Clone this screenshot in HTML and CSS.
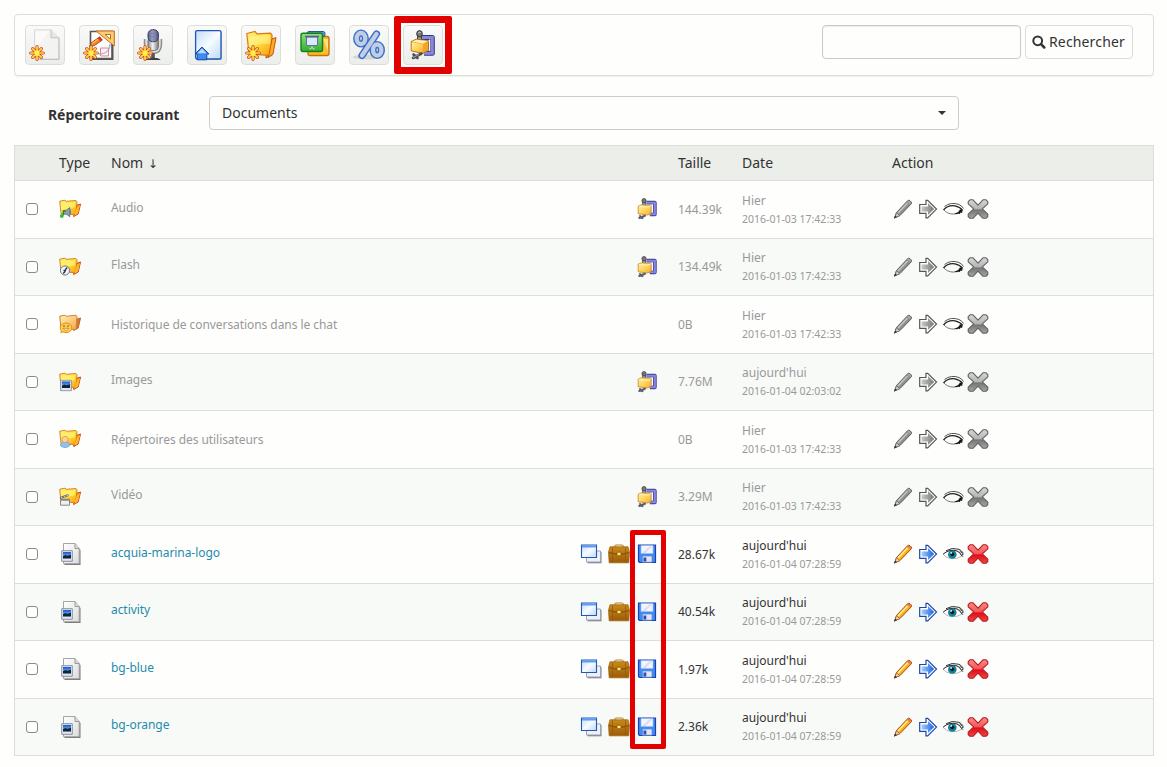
FILE: index.html
```html
<!DOCTYPE html>
<html lang="fr">
<head>
<meta charset="utf-8">
<title>Documents</title>
<link rel="stylesheet" href="styles.css">
</head>
<body>
<svg class="sprite" width="0" height="0" aria-hidden="true">
  <defs>
    <linearGradient id="gFolder" x1="0" y1="0" x2="1" y2="1"><stop offset="0" stop-color="#fff27a"/><stop offset=".5" stop-color="#ffdb3d"/><stop offset="1" stop-color="#f79a10"/></linearGradient>
    <linearGradient id="gPale" x1="0" y1="0" x2="1" y2="1"><stop offset="0" stop-color="#fff3b8"/><stop offset="1" stop-color="#f3a64c"/></linearGradient>
    <linearGradient id="gPaper" x1="0" y1="0" x2="1" y2="1"><stop offset="0" stop-color="#ffffff"/><stop offset="1" stop-color="#dcdcdc"/></linearGradient>
    <linearGradient id="gBlue" x1="0" y1="0" x2="1" y2="1"><stop offset="0" stop-color="#c3dcfa"/><stop offset=".5" stop-color="#f7fbff"/><stop offset="1" stop-color="#bcd9f8"/></linearGradient>
    <linearGradient id="gArrow" x1="0" y1="0" x2="1" y2="0"><stop offset="0" stop-color="#9ed0ff"/><stop offset="1" stop-color="#1b62dc"/></linearGradient>
    <linearGradient id="gArrowG" x1="0" y1="0" x2="1" y2="0"><stop offset="0" stop-color="#c9c9c9"/><stop offset="1" stop-color="#777"/></linearGradient>
    <linearGradient id="gRed" x1="0" y1="0" x2="0" y2="1"><stop offset="0" stop-color="#ff8a80"/><stop offset=".48" stop-color="#f1575a"/><stop offset=".55" stop-color="#e30c14"/><stop offset="1" stop-color="#f04545"/></linearGradient>
    <linearGradient id="gGray" x1="0" y1="0" x2="0" y2="1"><stop offset="0" stop-color="#d8d8d8"/><stop offset=".48" stop-color="#b4b4b4"/><stop offset=".55" stop-color="#757575"/><stop offset="1" stop-color="#a5a5a5"/></linearGradient>
    <linearGradient id="gGreen" x1="0" y1="0" x2="0" y2="1"><stop offset="0" stop-color="#93e07d"/><stop offset="1" stop-color="#2fae2f"/></linearGradient>
    <linearGradient id="gPhoto" x1="0" y1="0" x2="0" y2="1"><stop offset="0" stop-color="#1456c9"/><stop offset="1" stop-color="#9fdcff"/></linearGradient>
    <linearGradient id="gMic" x1="0" y1="0" x2="1" y2="0"><stop offset="0" stop-color="#55587c"/><stop offset=".45" stop-color="#a5a9cf"/><stop offset="1" stop-color="#484b6c"/></linearGradient>
    <linearGradient id="gMetal" x1="0" y1="0" x2="1" y2="0"><stop offset="0" stop-color="#888"/><stop offset=".45" stop-color="#f2f2f2"/><stop offset="1" stop-color="#777"/></linearGradient>
    <linearGradient id="gCase" x1="0" y1="0" x2="0" y2="1"><stop offset="0" stop-color="#c98a1c"/><stop offset="1" stop-color="#9c5a08"/></linearGradient>
    <linearGradient id="gBox" x1="0" y1="0" x2="1" y2="1"><stop offset="0" stop-color="#fff0a8"/><stop offset=".5" stop-color="#ffd65e"/><stop offset="1" stop-color="#f3ac35"/></linearGradient>
  </defs>

  <symbol id="star" viewBox="0 0 16 16">
    <g stroke="#cf4a1c" stroke-width="3.200" stroke-linecap="round"><path d="M8 1.700v12.600M1.700 8h12.600M3.600 3.600l8.800 8.800M12.400 3.600l-8.800 8.800"/></g>
    <g stroke="#ffd84a" stroke-width="1.700" stroke-linecap="round"><path d="M8 1.700v12.600M1.700 8h12.600M3.600 3.600l8.800 8.800M12.400 3.600l-8.800 8.800"/></g>
    <circle cx="8" cy="8" r="2.400" fill="#fff04e"/>
  </symbol>

  <symbol id="new-page" viewBox="0 0 32 32">
    <path d="M5.500.800h16.500l7.800 8V30H5.500z" fill="#f3f3f2" stroke="#dadada"/>
    <path d="M6.500 2h14l-14 18z" fill="#fff" opacity=".6"/>
    <path d="M22 .800v8h7.800" fill="#e6e6e6" stroke="#c4c4c4"/>
    <path d="M7 30.400h23V9" fill="none" stroke="#bdbdbd"/>
    <use href="#star" x="0" y="16" width="16" height="16"/>
  </symbol>

  <symbol id="draw" viewBox="0 0 32 32">
    <path d="M9 3.500h21.500V31H9z" fill="#555"/>
    <path d="M7.500 2.500h21.500V29.500H7.500z" fill="#fff" stroke="#555" stroke-width="1.600"/>
    <path d="M27 15c0 6-4 10-11 10" fill="none" stroke="#8dbcf0" stroke-width="1.500"/>
    <path d="M17.500 19h8v8h-8z" fill="#f6cdd6" fill-opacity=".3" stroke="#e9868d"/>
    <path fill-rule="evenodd" d="M13 2h18.300v15zm9 3.500 5.500 4.600V5.500z" fill="#f9cd74" stroke="#c66b18"/>
    <path d="m6.500 18 1.800-4.200 8.500-6 2.600 3.300-8.100 5.500z" fill="#f38a24" stroke="#a93b13" stroke-width=".9"/>
    <path d="m14.500 9 2.600 3.200 2-1.500-2.300-3z" fill="#d9352d"/>
    <path d="m9 14.500 6-4.300" stroke="#ffd36a"/>
    <use href="#star" x="0" y="16" width="16" height="16"/>
  </symbol>

  <symbol id="mic" viewBox="0 0 32 32">
    <path d="M7.500 10v5c0 6 3 9.500 8.500 9.500s8.500-3.500 8.500-9.500v-5" fill="#dedede" stroke="#8d8d8d" stroke-width="1.500"/>
    <path d="M14.200 24h3.600v5h-3.600z" fill="#555"/>
    <path d="M8.500 31c1-3 14-3 15 0z" fill="#3e3e3e"/>
    <rect x="11" y="8" width="10.500" height="13.500" rx="4" fill="url(#gMetal)" stroke="#777"/>
    <rect x="11" y=".700" width="10.500" height="12" rx="4.500" fill="url(#gMic)" stroke="#3f4160"/>
    <path d="M16.200 1v12M12 4.500h8.500M12 7.500h8.500" stroke="#767aa4" stroke-width=".800"/>
    <use href="#star" x="0" y="16" width="16" height="16"/>
  </symbol>

  <symbol id="upload" viewBox="0 0 32 32">
    <path d="M6 3h25v28H6z" fill="#b8c0cc"/>
    <rect x="4.600" y="1.600" width="25.400" height="28.400" rx="1.500" fill="url(#gBlue)" stroke="#1d56b4" stroke-width="1.300"/>
    <path d="m11 18 7 7h-2.200v5.800H6.200V25H4z" fill="#3f8af0" stroke="#174ca5"/>
    <path d="m11 19.500 4.500 4.800h-9z" fill="#b9dcff"/>
  </symbol>

  <symbol id="folder32" viewBox="0 0 32 32">
    <path d="M22 10h8.500l-3.300 15.500L21 29z" fill="#ee8a14" stroke="#c4500f"/>
    <path d="M1.800 4.500 10 2.500l2 2.400 13.500-.7L27 6l-.3 20.500L4 25z" fill="url(#gFolder)" stroke="#d9791a" stroke-width="1.200"/>
    <path d="m27 10 4-1.500-3 16.500-4.500 3.500z" fill="#ffab22" stroke="#c4500f" stroke-width=".9"/>
    <path d="M4 8c8-1.700 14-1.500 21-1.800V15C16 14 9 16 4 19z" fill="#fffaa5" opacity=".5"/>
  </symbol>
  <symbol id="new-folder" viewBox="0 0 32 32">
    <use href="#folder32" width="32" height="32"/>
    <use href="#star" x="0" y="16" width="16" height="16"/>
  </symbol>

  <symbol id="slides" viewBox="0 0 32 32">
    <rect x="9" y="7.500" width="21" height="19" rx="2" fill="#fcbd2b" stroke="#ca6c10" stroke-width="1.300"/>
    <path d="M24 10h5v12z" fill="#ffe47d"/>
    <rect x="8" y="2.500" width="18" height="5" rx="2" fill="#5c94df" stroke="#23559f"/>
    <rect x="2" y="4.200" width="21.500" height="18.300" rx="2" fill="url(#gGreen)" stroke="#168018" stroke-width="1.400"/>
    <path d="M7.500 8h11v8.500h-11z" fill="#dbe8fb" stroke="#5773a2"/>
    <path d="M6 7.500h14" stroke="#54618c" stroke-width="1.500"/>
    <path d="M13 17v2M10.500 20.500l2.500-2 2.500 2" fill="none" stroke="#b7d7b3" stroke-width="1.200"/>
  </symbol>

  <symbol id="percent" viewBox="0 0 32 32">
    <ellipse cx="15" cy="28" rx="15" ry="2.500" fill="#bbb" opacity=".5"/>
    <g fill="none" stroke="#3470d0" stroke-width="7.200"><ellipse cx="8" cy="9.500" rx="4.300" ry="5.500"/><ellipse cx="24.200" cy="21" rx="4.200" ry="5.500"/><path d="m23.500 5-14.500 21.500" stroke-linecap="round"/></g>
    <g fill="none" stroke="#c3cce0" stroke-width="4.300"><ellipse cx="8" cy="9.500" rx="4.300" ry="5.500"/><ellipse cx="24.200" cy="21" rx="4.200" ry="5.500"/><path d="m23.500 5-14.500 21.500" stroke-linecap="round"/></g>
  </symbol>

  <symbol id="compress" viewBox="0 0 32 32">
    <path d="M14.500 8.500h10.800v15.700H17" fill="none" stroke="#34347c" stroke-width="5" stroke-linejoin="round"/>
    <path d="M14.500 8.500h10.800v15.700H17" fill="none" stroke="#8588dc" stroke-width="3"/>
    <path d="M22.700 10.500v11.300" stroke="#fff" stroke-width="1.200"/>
    <path d="M10.500 5h4v6h-4z" fill="#999" stroke="#444"/>
    <ellipse cx="12.500" cy="4.800" rx="2.800" ry="3.200" fill="#777" stroke="#363636"/>
    <path d="M11.200 4c1-1 2-1 2.700 0" fill="none" stroke="#ddd"/>
    <path d="m4.200 12.500 5-2.300 12.300 1.500v9.500L16 24.500 4.200 21.800z" fill="#efa52a" stroke="#b36a18" stroke-width=".9"/>
    <path d="m4.800 12.600 4.800-1.800 11.200 1.200-4.800 2.800z" fill="#fff0b5"/>
    <path d="m4.800 13.200 11.200 2.200v8.300L4.800 21.200z" fill="url(#gBox)"/>
    <path d="m6 29 8.500-4.500M6.500 25.500l4 3.500" stroke="#4c4c56" stroke-width="2.600" stroke-linecap="round"/>
    <path d="m6 28.500 6-3" stroke="#aaa"/>
  </symbol>

  <symbol id="folder" viewBox="0 0 22 22">
    <path d="m16 8 5.500-2-2.300 10-4.500 2.500z" fill="#ef7e14" stroke="#bd4a10"/>
    <path d="m.700 3.200 5.300-1 1.200 1.100L17 2.500l1 1.200-1 13.200L2 15.500z" fill="url(#gFolder)" stroke="#d17b20" stroke-width=".9"/>
    <path d="m18.200 8.500 3-1.800-2.200 8.800-3.500 2.300z" fill="#ffb52a"/>
    <path d="M2 5.500 16 4.300v5L2 12z" fill="#fff87c" opacity=".6"/>
  </symbol>
  <symbol id="folder-audio" viewBox="0 0 22 22">
    <use href="#folder" width="22" height="22"/>
    <path d="m4.500 12.500 3-.3 3.200-2.700v9.300l-3.200-2.500-3-.2z" fill="#8d9db2" stroke="#5b7088" stroke-width=".8"/>
    <path d="M10 10.500q3 3.500 0 7.500" fill="none" stroke="#6483a9" stroke-width="1.300"/>
    <path d="M4.300 12.500v5m0-5 2.200 1.300" stroke="#1d8c25" stroke-width="1.300"/><circle cx="2.800" cy="18" r="1.900" fill="#39b83b"/>
  </symbol>
  <symbol id="folder-flash" viewBox="0 0 22 22">
    <use href="#folder" width="22" height="22"/>
    <circle cx="6" cy="14.500" r="4.600" fill="#eef3f9" stroke="#6c7889"/><path d="M4 17.300c3-.5 1.500-5 4.300-5.600M4.500 14.500H7" fill="none" stroke="#303948" stroke-width="1.400"/>
  </symbol>
  <symbol id="folder-chat" viewBox="0 0 22 22">
    <path d="m16 7 5.500-2-2.300 10-4.500 2.500z" fill="#dd792c" stroke="#b96024"/>
    <path d="m.700 3.200 5.300-1 1.200 1.100L17 2.200l1 1.200-1 13.200L2 15.500z" fill="url(#gPale)" stroke="#d18238"/>
    <ellipse cx="7" cy="14.800" rx="5.800" ry="4.800" fill="#ffd344" stroke="#e18a24"/><path d="m2 17.500-1 3 4-1.500" fill="#f5a32f"/>
    <path d="M5 12.300v1.500M9 12.300v1.500" stroke="#8b4b10" stroke-width="1.300"/><path d="M4 15.300h6q-3 4.200-6 0" fill="#fff" stroke="#c36717" stroke-width=".7"/>
  </symbol>
  <symbol id="photo" viewBox="0 0 12 12">
    <path d="M.700.700h10.600v10.600H.700z" fill="#e3e6ee" stroke="#8790a0"/><path d="M2 2h8v6.500H2z" fill="url(#gPhoto)"/><path d="M2 6.200 4.300 5l2 .700 3.700-1v3.800H2z" fill="#13233d"/>
  </symbol>
  <symbol id="folder-images" viewBox="0 0 22 22">
    <use href="#folder" width="22" height="22"/><use href="#photo" x="1" y="8.500" width="12" height="12"/>
  </symbol>
  <symbol id="folder-users" viewBox="0 0 22 22">
    <use href="#folder" width="22" height="22"/>
    <path d="M1.300 17c.5-4.500 9-4.500 9.600 0-1.200 3.300-8.400 3.300-9.600 0z" fill="#8fc0f0" stroke="#6a9fd6" stroke-width=".8"/><circle cx="6" cy="11.500" r="3.100" fill="#ffd49b" stroke="#d99a52" stroke-width=".9"/>
  </symbol>
  <symbol id="folder-video" viewBox="0 0 22 22">
    <use href="#folder" width="22" height="22"/>
    <path d="M1.500 13.200h9v6h-9z" fill="#efefef" stroke="#888"/><path d="m1 12 8.500-3" stroke="#666" stroke-width="2"/><path d="m2 11.600 8-2.800" stroke="#ddd" stroke-dasharray="1.500 1.500"/><path d="M1.500 14h9" stroke="#777" stroke-width="1.300"/>
  </symbol>
  <symbol id="image-file" viewBox="0 0 22 22">
    <path d="M5.500 1.500H17l4.500 5.500v15H5.500z" fill="#777"/>
    <path d="M4.500.500H16l4.200 5v15.200H4.500z" fill="url(#gPaper)" stroke="#a5a5a5"/>
    <path d="M16 .500v5h4.200" fill="#ddd" stroke="#999"/>
    <use href="#photo" x="2" y="7" width="12" height="12"/>
  </symbol>

  <symbol id="pack" viewBox="0 0 22 22">
    <path d="M10.500 4.700h8.300v11.600h-5" fill="none" stroke="#3c3c93" stroke-width="3.800" stroke-linejoin="round"/>
    <path d="M10.500 4.700h8.300v11.600h-5" fill="none" stroke="#8689e4" stroke-width="2.100"/>
    <path d="M16.200 6.600v7.800" stroke="#fff" stroke-width="1.400"/>
    <path d="M6.500 3h3v5h-3z" fill="#999" stroke="#555" stroke-width=".8"/>
    <ellipse cx="8" cy="2.700" rx="2.100" ry="2.200" fill="#777" stroke="#444" stroke-width=".8"/>
    <path d="M2.200 8 5.500 6.800l9.700.7v8L11.500 17l-9.300-1.200z" fill="url(#gBox)" stroke="#c78325" stroke-width=".8"/>
    <path d="m2.700 8.200 8.500 1 3.500-1.400" fill="none" stroke="#fff4bd"/>
    <path d="m3.200 20 5.800-2.300M4 18l2.500 2.200" stroke="#5d5d6c" stroke-width="2" stroke-linecap="round"/>
  </symbol>

  <symbol id="window" viewBox="0 0 22 22">
    <path d="M7.500 9h14v11.300h-14z" fill="#777f8f"/>
    <path d="M6.500 8h14v11h-14z" fill="#eef0f6" stroke="#9aa2b2"/>
    <path d="M1.500 2h15v12.500h-15z" fill="url(#gBlue)" stroke="#2159b8" stroke-width="1.100"/>
    <path d="M2 2.500h14v2H2z" fill="#5d9cf3"/>
  </symbol>
  <symbol id="briefcase" viewBox="0 0 22 22">
    <path d="M6.500 4.500q0-2.500 2.500-2.500h4q2.500 0 2.500 2.500" fill="none" stroke="#cdaa62" stroke-width="1.500"/>
    <path d="M2 3.800h18l1.500 5.500-.7 10.500H1.200L.5 9.300z" fill="url(#gCase)" stroke="#a06712" stroke-width=".8"/>
    <path d="M1.300 9.500q10 3.500 19.400 0" fill="none" stroke="#7c4607"/>
    <path d="M4.500 4.500v15M17.500 4.500v15" stroke="#94590a" stroke-width=".8"/>
    <rect x="9" y="9.200" width="4" height="3.500" rx=".7" fill="#ffe66a" stroke="#8b5607" stroke-width=".8"/>
  </symbol>
  <symbol id="floppy" viewBox="0 0 22 22">
    <path d="M2.500 2h17v17.500h-16l-1-1z" fill="#3e8cf3" stroke="#203fae" stroke-width="1.200"/>
    <path d="M5 2.500h12v8H5z" fill="#f2f5ff" stroke="#9bb9ed" stroke-width=".6"/><path d="m14 3 2.500 0-7 7H6z" fill="#dadfed"/>
    <path d="M6.500 13h9.500v6.200H6.500z" fill="#e3e6f0" stroke="#5c86d0" stroke-width=".7"/><path d="M7.500 14.500h2.800v4H7.500z" fill="#274fb4"/>
  </symbol>

  <symbol id="pencil" viewBox="0 0 22 22">
    <path d="M2.500 20 4.500 14.500 15.800 2.500q1-.7 2.200.2l1.200 1.200q.8 1 0 2L8 17.500z" fill="#ffad1b" stroke="#a14a17"/>
    <path d="M6 15 15.500 5" stroke="#fff28a" stroke-width="1.600"/><path d="m15.300 3.300 1-.8q1.500.3 2.700 2.600l-1 1z" fill="#e46f60"/>
    <path d="m4.500 14.700 3.300 3-5 1.900z" fill="#f4cfaa" stroke="#8c5b35" stroke-width=".7"/><path d="m3.200 17.500 1.700 1.600-3.100 1.600z" fill="#333"/>
  </symbol>
  <symbol id="pencil-off" viewBox="0 0 22 22">
    <path d="M2.500 20 4.500 14.500 15.800 2.500q1-.7 2.200.2l1.200 1.200q.8 1 0 2L8 17.500z" fill="#8f8f8f" stroke="#606060"/>
    <path d="M6 15 15.500 5" stroke="#c4c4c4" stroke-width="1.600"/><path d="m15.300 3.300 1-.8q1.500.3 2.700 2.600l-1 1z" fill="#aaa"/>
    <path d="m4.500 14.700 3.300 3-5 1.900z" fill="#ccc" stroke="#666" stroke-width=".7"/><path d="m3.200 17.500 1.700 1.600-3.100 1.600z" fill="#333"/>
  </symbol>
  <symbol id="arrow" viewBox="0 0 22 22">
    <path d="M2.700 6.500H9V2.300h1.700l8.800 8.800-8.800 8.800H9v-4.500H2.700z" fill="#fff" stroke="#2045a8" stroke-width="1.200"/>
    <path d="M4.500 8.500H11V5l6.200 6.100-6.200 6v-3.600H4.500z" fill="url(#gArrow)"/>
  </symbol>
  <symbol id="arrow-off" viewBox="0 0 22 22">
    <path d="M2.700 6.500H9V2.300h1.700l8.800 8.800-8.800 8.800H9v-4.500H2.700z" fill="#fff" stroke="#555" stroke-width="1.200"/>
    <path d="M4.500 8.500H11V5l6.200 6.100-6.200 6v-3.600H4.500z" fill="url(#gArrowG)"/>
  </symbol>
  <symbol id="eye" viewBox="0 0 22 22">
    <path d="M1 11.300Q7 5.500 15.500 8q3 1.500 4.500 5-5 3.300-11 2.700-4.500-.7-8-4.400z" fill="#fff" stroke="#999" stroke-width=".7"/>
    <circle cx="10.300" cy="11.500" r="4.300" fill="#178099"/><circle cx="10.300" cy="11.300" r="1.900" fill="#061c25"/><circle cx="9.200" cy="9.900" r=".9" fill="#d7f8ff"/>
    <path d="M4 7.700Q10 4 17 6.300q2.500 1.200 4 3.500M1.200 11Q8 5.500 15 8q3.500 1.600 4.500 4.500" fill="none" stroke="#333" stroke-width="1"/>
    <path d="m17.500 8 4 3-2 1 1.500 1.800" fill="none" stroke="#333" stroke-width=".9"/>
  </symbol>
  <symbol id="eye-off" viewBox="0 0 22 22">
    <path d="M2.500 8.500Q9 3.500 17 6.500q3 1.300 4.500 4" fill="none" stroke="#444" stroke-width=".9"/>
    <path d="M1.500 12Q6 6.700 13 7.800q5 1 7.500 4.200" fill="none" stroke="#222" stroke-width="1.300"/>
    <path d="M1.500 11.500q3.500 4.500 10 4.600 4.500.2 9-3.100" fill="none" stroke="#555" stroke-width=".8"/>
    <path d="M12 15.200q4.500 0 6-4l3.500 1.700-2 .7 1 1.400-2.500-.4.200 1.700-2-1-1 1z" fill="#111"/>
  </symbol>
  <symbol id="cross" viewBox="0 0 22 22">
    <path d="M3 1.800h3l5 5.300 5-5.300h3l1.800 1.800v2.200l-5.500 5.100 5.500 5.300v2.300L19 20.300h-3l-5-5.200-5 5.200H3l-1.800-1.800v-2.300l5.500-5.300-5.500-5.100V3.600z" fill="url(#gRed)" stroke="#b41b22" stroke-width="1.100" stroke-linejoin="round"/>
  </symbol>
  <symbol id="cross-off" viewBox="0 0 22 22">
    <path d="M3 1.800h3l5 5.300 5-5.300h3l1.800 1.800v2.200l-5.500 5.100 5.500 5.300v2.300L19 20.300h-3l-5-5.200-5 5.200H3l-1.800-1.800v-2.300l5.500-5.300-5.500-5.100V3.600z" fill="url(#gGray)" stroke="#606060" stroke-width="1.100" stroke-linejoin="round"/>
  </symbol>
  <symbol id="actions-on" viewBox="0 0 97 22">
    <use href="#pencil" width="22" height="22"/><use href="#arrow" x="25" width="22" height="22"/><use href="#eye" x="50" width="22" height="22"/><use href="#cross" x="75" width="22" height="22"/>
  </symbol>
  <symbol id="actions-off" viewBox="0 0 97 22">
    <use href="#pencil-off" width="22" height="22"/><use href="#arrow-off" x="25" width="22" height="22"/><use href="#eye-off" x="50" width="22" height="22"/><use href="#cross-off" x="75" width="22" height="22"/>
  </symbol>
</svg>

<header class="toolbar">
  <div class="tools">
    <button class="tool"><svg><use href="#new-page"/></svg></button>
    <button class="tool"><svg><use href="#draw"/></svg></button>
    <button class="tool"><svg><use href="#mic"/></svg></button>
    <button class="tool"><svg><use href="#upload"/></svg></button>
    <button class="tool"><svg><use href="#new-folder"/></svg></button>
    <button class="tool"><svg><use href="#slides"/></svg></button>
    <button class="tool"><svg><use href="#percent"/></svg></button>
    <button class="tool marked"><svg><use href="#compress"/></svg></button>
  </div>
  <form class="search">
    <input class="search-field" type="text">
    <button class="search-button" type="button"><svg viewBox="0 0 14 14"><circle cx="5.700" cy="5.800" r="4.400" fill="none" stroke="#333" stroke-width="2"/><path d="m9 9.200 3.300 3.300" stroke="#333" stroke-width="2.500" stroke-linecap="round"/></svg>Rechercher</button>
  </form>
</header>

<div class="current">
  <span class="current-label">Répertoire courant</span>
  <div class="select"><span>Documents</span><i class="caret"></i></div>
</div>

<main class="files">
  <div class="head"><span></span><span>Type</span><span>Nom <span class="sort">↓</span></span><span></span><span>Taille</span><span>Date</span><span>Action</span></div>
  <div class="row off"><input type="checkbox"><svg class="ico"><use href="#folder-audio"/></svg><span class="name up">Audio</span><span class="links"><svg class="ico"><use href="#pack"/></svg></span><span class="size">144.39k</span><span class="date">Hier<small>2016-01-03 17:42:33</small></span><svg class="actions"><use href="#actions-off"/></svg></div>
  <div class="row off"><input type="checkbox"><svg class="ico"><use href="#folder-flash"/></svg><span class="name up">Flash</span><span class="links"><svg class="ico"><use href="#pack"/></svg></span><span class="size">134.49k</span><span class="date">Hier<small>2016-01-03 17:42:33</small></span><svg class="actions"><use href="#actions-off"/></svg></div>
  <div class="row off"><input type="checkbox"><svg class="ico"><use href="#folder-chat"/></svg><span class="name">Historique de conversations dans le chat</span><span class="links"></span><span class="size">0B</span><span class="date">Hier<small>2016-01-03 17:42:33</small></span><svg class="actions"><use href="#actions-off"/></svg></div>
  <div class="row off"><input type="checkbox"><svg class="ico"><use href="#folder-images"/></svg><span class="name up">Images</span><span class="links"><svg class="ico"><use href="#pack"/></svg></span><span class="size">7.76M</span><span class="date">aujourd'hui<small>2016-01-04 02:03:02</small></span><svg class="actions"><use href="#actions-off"/></svg></div>
  <div class="row off"><input type="checkbox"><svg class="ico"><use href="#folder-users"/></svg><span class="name">Répertoires des utilisateurs</span><span class="links"></span><span class="size">0B</span><span class="date">Hier<small>2016-01-03 17:42:33</small></span><svg class="actions"><use href="#actions-off"/></svg></div>
  <div class="row off"><input type="checkbox"><svg class="ico"><use href="#folder-video"/></svg><span class="name up">Vidéo</span><span class="links"><svg class="ico"><use href="#pack"/></svg></span><span class="size">3.29M</span><span class="date">Hier<small>2016-01-03 17:42:33</small></span><svg class="actions"><use href="#actions-off"/></svg></div>
  <div class="row"><input type="checkbox"><svg class="ico"><use href="#image-file"/></svg><a class="name up">acquia-marina-logo</a><span class="links"><svg class="ico"><use href="#window"/></svg><svg class="ico"><use href="#briefcase"/></svg><svg class="ico"><use href="#floppy"/></svg></span><span class="size">28.67k</span><span class="date">aujourd'hui<small>2016-01-04 07:28:59</small></span><svg class="actions"><use href="#actions-on"/></svg></div>
  <div class="row"><input type="checkbox"><svg class="ico"><use href="#image-file"/></svg><a class="name up">activity</a><span class="links"><svg class="ico"><use href="#window"/></svg><svg class="ico"><use href="#briefcase"/></svg><svg class="ico"><use href="#floppy"/></svg></span><span class="size">40.54k</span><span class="date">aujourd'hui<small>2016-01-04 07:28:59</small></span><svg class="actions"><use href="#actions-on"/></svg></div>
  <div class="row"><input type="checkbox"><svg class="ico"><use href="#image-file"/></svg><a class="name up">bg-blue</a><span class="links"><svg class="ico"><use href="#window"/></svg><svg class="ico"><use href="#briefcase"/></svg><svg class="ico"><use href="#floppy"/></svg></span><span class="size">1.97k</span><span class="date">aujourd'hui<small>2016-01-04 07:28:59</small></span><svg class="actions"><use href="#actions-on"/></svg></div>
  <div class="row"><input type="checkbox"><svg class="ico"><use href="#image-file"/></svg><a class="name up">bg-orange</a><span class="links"><svg class="ico"><use href="#window"/></svg><svg class="ico"><use href="#briefcase"/></svg><svg class="ico"><use href="#floppy"/></svg></span><span class="size">2.36k</span><span class="date">aujourd'hui<small>2016-01-04 07:28:59</small></span><svg class="actions"><use href="#actions-on"/></svg></div>
  <div class="column-mark"></div>
</main>
</body>
</html>
```

FILE: styles.css
```css
* { box-sizing: border-box; }
body {
  margin: 0;
  padding: 14px 13px 0 14px;
  height: 767px;
  overflow: hidden;
  background: #fefefd;
  color: #333;
  font: 14px/20px "Noto Sans", sans-serif;
}
svg { display: block; flex: none; }
.sprite { position: absolute; }
button, input { font: inherit; color: inherit; margin: 0; }

.toolbar {
  display: flex;
  justify-content: space-between;
  height: 62px;
  padding: 10px 20px 0 10px;
  border: 1px solid #dcdedc;
  border-radius: 4px;
  box-shadow: 0 1px 1px rgba(0, 0, 0, .06);
}
.tools { display: flex; gap: 14px; }
.tool {
  position: relative;
  width: 40px;
  height: 40px;
  padding: 3px;
  border: 1px solid #dcdedc;
  border-radius: 4px;
  background: linear-gradient(#f9faf9, #eceeeb);
}
.tool svg { width: 32px; height: 32px; }
.marked::after {
  content: "";
  position: absolute;
  inset: -10px -10px -10px;
  border: 7px solid #e30000;
  border-radius: 2px;
}
.search { display: flex; gap: 4px; }
.search-field {
  width: 199px;
  height: 34px;
  border: 1px solid #c9cbc9;
  border-radius: 4px;
  background: #fefefd;
  box-shadow: inset 0 1px 1px rgba(0, 0, 0, .075);
}
.search-button {
  display: flex;
  align-items: center;
  gap: 3px;
  width: 108px;
  height: 34px;
  padding: 0 0 1px 6px;
  border: 1px solid #dcdedc;
  border-radius: 4px;
  background: #fefefd;
  white-space: nowrap;
  letter-spacing: .15px;
}
.search-button svg { width: 14px; height: 14px; }

.current {
  display: flex;
  height: 34px;
  margin: 20px 0 15px;
  padding-left: 34px;
}
.current-label {
  width: 161px;
  padding-top: 9px;
  font-weight: bold;
  letter-spacing: -.08px;
}
.select {
  display: flex;
  align-items: center;
  justify-content: space-between;
  width: 750px;
  padding: 0 12px;
  border: 1px solid #ccc;
  border-radius: 4px;
}
.caret {
  border: 4px solid transparent;
  border-top-color: #333;
  border-bottom: 0;
}

.files {
  position: relative;
  border: 1px solid #dcdedc;
  border-bottom: 0;
}
.head, .row {
  display: grid;
  grid-template-columns: 33px 52px 449px 118px 64px 150px 1fr;
  align-items: center;
  padding-left: 11px;
  border-bottom: 1px solid #dcdedc;
}
.head { height: 35px; background: #eceeea; }
.sort { margin-left: 1px; font-family: "DejaVu Sans", sans-serif; font-size: 12px; line-height: 1; }
.row { height: 57.5px; font-size: 12px; line-height: 18px; }
.row:nth-child(odd) { background: #f8faf8; }
.off { color: #999; }
.row input {
  appearance: none;
  width: 12px;
  height: 12px;
  border: 1px solid #8b8b8b;
  border-radius: 3px;
  background: #fff;
}
.ico { width: 22px; height: 22px; }
.name { padding-top: 1px; white-space: nowrap; letter-spacing: -.06px; }
.up { padding: 0 0 3px; }
a.name { color: #1e8cab; }
.links { display: flex; justify-content: flex-end; gap: 6px; margin: 0 20px 0 -50px; }
.size { padding-top: 1px; }
.date { padding-top: 1px; }
.date small { display: block; font-size: 10.5px; color: #999; }
.actions { width: 97px; height: 22px; }

.column-mark {
  position: absolute;
  top: 384px;
  left: 615px;
  width: 36px;
  height: 219px;
  border: 5px solid #e30000;
  border-radius: 2px;
}
```
